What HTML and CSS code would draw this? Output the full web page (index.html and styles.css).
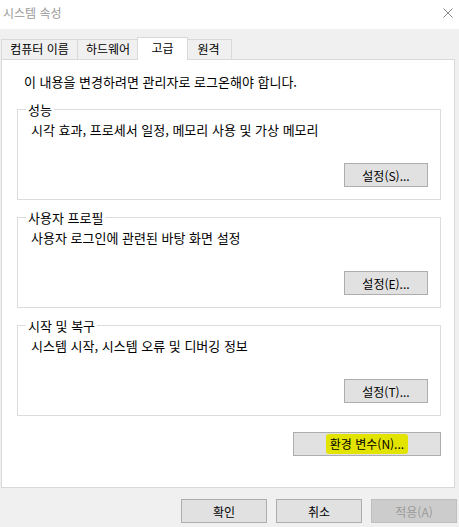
FILE: index.html
```html
<!doctype html>
<html lang="ko">
<head>
  <meta charset="UTF-8">
  <title>시스템 속성</title>
  <link rel="stylesheet" href="styles.css">
</head>
<body>
  <div class="titlebar">
    <span class="title">시스템 속성</span>
    <svg class="close" width="10" height="10" viewBox="0 0 10 10">
      <path d="M0.5 0.5 L9.5 9.5 M9.5 0.5 L0.5 9.5" stroke="#8a8a8a" stroke-width="1" fill="none"/>
    </svg>
  </div>

  <ul class="tabs">
    <li class="tab tab-name">컴퓨터 이름</li>
    <li class="tab tab-hw">하드웨어</li>
    <li class="tab active">고급</li>
    <li class="tab tab-remote">원격</li>
  </ul>

  <div class="panel">
    <p class="notice">이 내용을 변경하려면 관리자로 로그온해야 합니다.</p>

    <fieldset class="group">
      <legend>성능</legend>
      <p>시각 효과, 프로세서 일정, 메모리 사용 및 가상 메모리</p>
      <div class="group-foot"><button class="btn">설정(S)...</button></div>
    </fieldset>

    <fieldset class="group">
      <legend>사용자 프로필</legend>
      <p>사용자 로그인에 관련된 바탕 화면 설정</p>
      <div class="group-foot"><button class="btn">설정(E)...</button></div>
    </fieldset>

    <fieldset class="group">
      <legend>시작 및 복구</legend>
      <p>시스템 시작, 시스템 오류 및 디버깅 정보</p>
      <div class="group-foot"><button class="btn">설정(T)...</button></div>
    </fieldset>

    <div class="env-row">
      <button class="btn env"><span class="mark">환경 변수(N)...</span></button>
    </div>
  </div>

  <div class="footer">
    <button class="btn">확인</button>
    <button class="btn">취소</button>
    <button class="btn" disabled>적용(A)</button>
  </div>
</body>
</html>
```

FILE: styles.css
```css
* {
  margin: 0;
  padding: 0;
  box-sizing: border-box;
}
body {
  width: 459px;
  background-color: #f0f0f0;
  color: #000;
  font-family: "Noto Sans CJK KR", "Noto Sans", sans-serif;
  font-size: 13px;
  line-height: 16px;
}
.titlebar {
  height: 29px;
  background-color: #fff;
  display: flex;
  justify-content: space-between;
  align-items: flex-start;
  padding: 5px 6px 0 3px;
}
.title {
  color: #9a9a9a;
  font-size: 12px;
  line-height: 16px;
}
.close {
  margin-top: 3px;
}
.tabs {
  list-style: none;
  display: flex;
  align-items: flex-end;
  height: 22px;
  margin-top: 8px;
  padding-left: 1px;
  font-size: 12px;
}
.tab {
  height: 20px;
  line-height: 18px;
  text-align: center;
  border: 1px solid #d9d9d9;
  border-bottom: none;
  background-color: #f0f0f0;
  margin-left: -1px;
}
.tab-name {
  width: 77px;
  margin-left: 0;
}
.tab-hw {
  width: 62px;
}
.tab-remote {
  width: 47px;
}
.tab.active {
  position: relative;
  z-index: 1;
  width: 51px;
  height: 23px;
  line-height: 19px;
  margin: 0 -2px -1px -2px;
  background-color: #fff;
}
.panel {
  width: 454px;
  height: 429px;
  margin-left: 1px;
  background-color: #fff;
  border: 1px solid #d9d9d9;
  padding: 14px 13px 0 15px;
}
.notice {
  padding-left: 7px;
}
.group {
  border: 1px solid #dcdcdc;
  margin-top: 9px;
  padding: 0 12px 12px 13px;
}
.notice + .group {
  margin-top: 11px;
}
.group legend {
  line-height: 17px;
  padding: 0 2px;
  margin-left: -5px;
}
.group p {
  margin-top: 4px;
}
.group-foot {
  display: flex;
  justify-content: flex-end;
  margin-top: 25px;
}
.btn {
  height: 24px;
  width: 84px;
  font-family: inherit;
  font-size: 12px;
  color: #000;
  background-color: #e1e1e1;
  border: 1px solid #adadad;
}
.btn:disabled {
  color: #9a9a9a;
  background-color: #cccccc;
  border-color: #bfbfbf;
}
.env-row {
  display: flex;
  justify-content: flex-end;
  margin-top: 16px;
}
.btn.env {
  width: 148px;
}
.mark {
  display: inline-block;
  background-color: #e3e300;
  line-height: 20px;
  padding: 0 4px;
  border-radius: 3px;
}
.footer {
  display: flex;
  justify-content: flex-end;
  gap: 9px;
  margin-top: 11px;
  padding-right: 2px;
}
.footer .btn {
  width: 86px;
}
```
